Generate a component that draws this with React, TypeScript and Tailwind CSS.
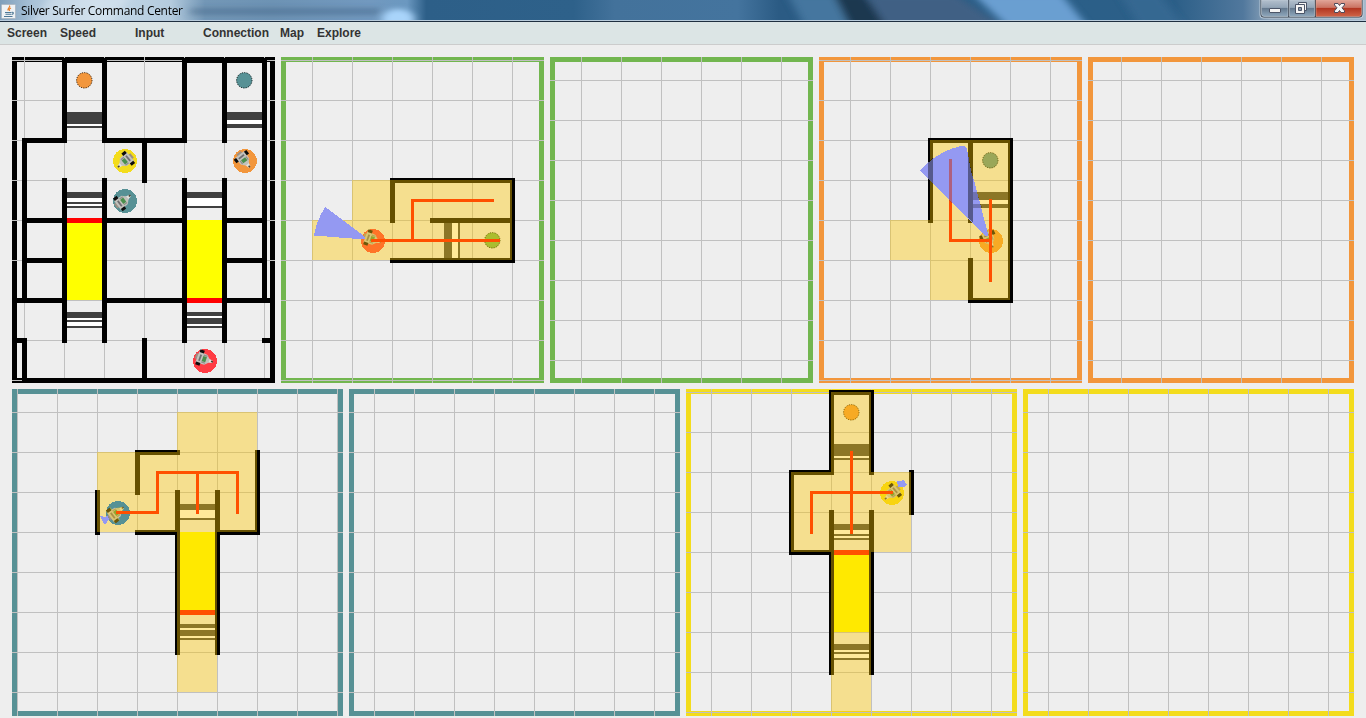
import React from 'react';

type Pt = [number, number];
type Seg = [number, number, number, number];
type Rect = [number, number, number, number];

const GREEN = '#72b64f';
const ORANGE = '#f2963c';
const TEAL = '#579195';
const YELLOW = '#f3dc1c';
const RED = '#ff3c44';

interface BarcodeSpec {
  x: number;
  y: number;
  /** Stripe widths, dark and light in turn, starting with dark. */
  stripes: number[];
  vertical?: boolean;
}

interface RobotSpec {
  x: number;
  y: number;
  color: string;
  angle: number;
  dx?: number;
  dy?: number;
  /** Shades the body as part of the explored area. */
  tinted?: boolean;
}

interface BoardProps {
  x: number;
  y: number;
  w: number;
  h: number;
  color: string;
  gx: number;
  gy: number;
  walls?: Seg[];
  fills?: { r: Rect; color: string }[];
  barcodes?: BarcodeSpec[];
  balls?: { x: number; y: number; color: string }[];
  robots?: RobotSpec[];
  paths?: Pt[][];
  explored?: Rect[];
  children?: React.ReactNode;
}

function Barcode({ x, y, stripes, vertical }: BarcodeSpec) {
  let at = 0;
  return (
    <g>
      {stripes.map((s, i) => {
        const from = at;
        at += s;
        const fill = i % 2 === 0 ? '#404040' : '#ffffff';
        return vertical ? (
          <rect key={i} x={x + from} y={y} width={s} height={35} fill={fill} />
        ) : (
          <rect key={i} x={x} y={y + from} width={35} height={s} fill={fill} />
        );
      })}
    </g>
  );
}

function Ball({ x, y, color }: { x: number; y: number; color: string }) {
  return (
    <g shapeRendering="auto">
      <circle cx={x + 0.3} cy={y + 0.3} r={7.9} fill={color} />
      <circle
        cx={x + 0.3}
        cy={y + 0.3}
        r={7.7}
        fill="none"
        stroke="#000"
        strokeWidth={0.9}
        strokeDasharray="1 1.4"
      />
    </g>
  );
}

function Robot({ x, y, color, angle, dx = 0, dy = 0, tinted }: RobotSpec) {
  return (
    <g>
      <circle cx={x} cy={y} r={12} fill={color} />
      <g transform={`translate(${x + dx} ${y + dy}) rotate(${angle})`} shapeRendering="auto">
        <path d="M-2.500 -9h5.500v3h-5.500z" fill="#9b8f84" />
        <path d="M-2.6 2h5.2l-1.4 7h-2.2z" fill="#e3e3de" />
        <path d="M-6 -7h12l-1 9l-3.500 3.500h-3.400l-3.400 -3.500z" fill="#c2c2bc" />
        <path d="M-8 -6.500h3v4.500h-3zM5 -6.500h3v4.500h-3z" fill="#0c0c0c" />
        <path d="M-3.4 -5h6.6v1.8h-6.6z" fill="#6e6e72" />
        <path d="M-4.200 -1.600h1.200v4h-1.200zM3 -1.600h1.200v4h-1.200z" fill="#8e8e8a" />
        <path d="M-2.6 -1.6h5.2v3.8h-5.2z" fill="#4a8f4c" />
        <path d="M-0.600 7.400h1.600v2h-1.600z" fill="#4a4030" />
        {tinted && <path d="M-8 -7h16v6h-3l-1.500 5l-2.300 5h-2.200l-2.500 -5l-1.500 -5h-3z" fill="#ffc800" fillOpacity={0.4} />}
      </g>
    </g>
  );
}

function Board(p: BoardProps) {
  const vs: number[] = [];
  for (let v = p.gx; v < p.x + p.w; v += 40) vs.push(v);
  const hs: number[] = [];
  for (let v = p.gy; v < p.y + p.h; v += 40) hs.push(v);
  return (
    <svg
      className="block shrink-0"
      width={p.w}
      height={p.h}
      viewBox={`${p.x} ${p.y} ${p.w} ${p.h}`}
      shapeRendering="crispEdges"
    >
      <rect x={p.x + 2.5} y={p.y + 2.5} width={p.w - 5} height={p.h - 5} fill="#eeeeee" stroke={p.color} strokeWidth={5} />
      {vs.map((v) => (
        <rect key={'v' + v} x={v} y={p.y} width={1} height={p.h} fill="#c0c0c0" />
      ))}
      {hs.map((v) => (
        <rect key={'h' + v} x={p.x} y={v} width={p.w} height={1} fill="#c0c0c0" />
      ))}
      {p.barcodes?.map((b, i) => <Barcode key={i} {...b} />)}
      {p.fills?.map((f, i) => (
        <rect key={i} x={f.r[0]} y={f.r[1]} width={f.r[2]} height={f.r[3]} fill={f.color} />
      ))}
      {p.walls?.map(([x1, y1, x2, y2], i) => (
        <rect key={i} x={x1 - 2} y={y1 - 2} width={x2 - x1 + 5} height={y2 - y1 + 5} fill="#000" />
      ))}
      {p.balls?.map((b, i) => <Ball key={i} {...b} />)}
      {p.robots?.map((r, i) => <Robot key={i} {...r} />)}
      {p.paths?.map((pts, i) => (
        <polyline
          key={i}
          points={pts.map(([a, b]) => `${a + 0.5},${b + 0.5}`).join(' ')}
          fill="none"
          stroke="#ff0000"
          strokeWidth={3}
          strokeLinecap="square"
          strokeLinejoin="miter"
        />
      ))}
      {p.explored?.map(([x, y, w, h], i) => (
        <rect key={i} x={x} y={y} width={w} height={h} fill="#ffc800" fillOpacity={0.4} />
      ))}
      {p.children}
    </svg>
  );
}

function TitleBackdrop() {
  return (
    <svg className="absolute inset-0" width={1366} height={20} viewBox="0 0 1366 20" preserveAspectRatio="none">
      <defs>
        <linearGradient id="sky" x1="0" x2="1366" y1="0" y2="0" gradientUnits="userSpaceOnUse">
          <stop offset="0" stopColor="#7f9fbb" />
          <stop offset="0.025" stopColor="#aac3d8" />
          <stop offset="0.07" stopColor="#c6d9e8" />
          <stop offset="0.125" stopColor="#b4cbde" />
          <stop offset="0.15" stopColor="#7397b6" />
          <stop offset="0.2" stopColor="#6d93b4" />
          <stop offset="0.27" stopColor="#7299bf" />
          <stop offset="0.298" stopColor="#6b98c0" />
          <stop offset="0.312" stopColor="#2d5f88" />
          <stop offset="0.42" stopColor="#2e618a" />
          <stop offset="0.45" stopColor="#43729b" />
          <stop offset="0.54" stopColor="#44749e" />
          <stop offset="0.57" stopColor="#2b5b84" />
          <stop offset="0.8" stopColor="#2b5f88" />
          <stop offset="0.86" stopColor="#2c5f88" />
          <stop offset="0.91" stopColor="#51789d" />
          <stop offset="0.93" stopColor="#8ea5bb" />
          <stop offset="1" stopColor="#a5b9cc" />
        </linearGradient>
        <filter id="soft" x="-20%" y="-100%" width="140%" height="300%">
          <feGaussianBlur stdDeviation="4 2.5" />
        </filter>
      </defs>
      <rect width={1366} height={20} fill="url(#sky)" />
      <g filter="url(#soft)">
        <ellipse cx={398} cy={19} rx={16} ry={10} fill="#a9d4fa" />
        <path d="M50 -4h80l-20 30h-80z" fill="#dce8f1" opacity=".5" />
        <path d="M190 8h190v7h-190z" fill="#3d6183" opacity=".45" />
        <path d="M788 -5h48l25 32h-56z" fill="#45769f" />
        <path d="M834 -5h30l24 32h-38z" fill="#1a3850" />
        <path d="M866 -5h90l48 32h-118z" fill="#416184" />
        <path d="M974 -5h88l26 32h-80z" fill="#6b9fd1" />
        <path d="M1120 -5h40l25 32h-45z" fill="#3c6e98" opacity=".6" />
      </g>
    </svg>
  );
}

function TitleBar() {
  return (
    <header className="relative h-[22px] w-full shrink-0 overflow-hidden border-b border-[#1f2f40] bg-[#b8cbdb]">
      <TitleBackdrop />
      <div className="relative flex h-[20px] items-center">
        <svg className="ml-px mt-[2px]" width={15} height={15} viewBox="0 0 15 15">
          <rect x={0.5} y={0.5} width={14} height={14} rx={1} fill="#eef2f5" stroke="#aeb9c4" />
          <path d="M8.5 1.5c1.5 2-3 2.8-1.200 5M10 4c-1.800.8-2.300 1.500-1.200 3" fill="none" stroke="#e8812b" strokeWidth={1.2} />
          <path d="M4 8.500h6.500M4.500 10.300h5.500M3 12.500h8.500M10.800 8.300c2.200-.4 2 2-.3 2.200" fill="none" stroke="#4d7896" strokeWidth={1.1} />
        </svg>
        <span className="ml-[5px] mt-[2px] whitespace-nowrap font-['Open_Sans','Noto_Sans',sans-serif] text-[12px] leading-[18px] tracking-[-0.3px] text-black">
          Silver Surfer Command Center
        </span>
        <svg className="ml-auto mr-[2px] self-start" width={105} height={19} viewBox="1259 0 105 19">
          <defs>
            <linearGradient id="glass" x1="0" x2="0" y1="0" y2="1">
              <stop offset="0" stopColor="#b3c0cd" />
              <stop offset="0.45" stopColor="#93a5b7" />
              <stop offset="0.5" stopColor="#64798e" />
              <stop offset="1" stopColor="#8fa8bd" />
            </linearGradient>
            <linearGradient id="close" x1="0" x2="0" y1="0" y2="1">
              <stop offset="0" stopColor="#e0a598" />
              <stop offset="0.45" stopColor="#cb7463" />
              <stop offset="0.5" stopColor="#b23621" />
              <stop offset="1" stopColor="#cf6448" />
            </linearGradient>
          </defs>
          <path d="M1259.500 0V14.500q0 4 4 4H1359.500q4 0 4-4V0z" fill="#c8d5e0" opacity=".8" />
          <path d="M1260.500 0V14q0 3.500 3.500 3.500H1359q3.500 0 3.500-3.500V0z" fill="#2b3644" />
          <path d="M1261.500 0V14q0 2.500 2.500 2.500H1288V0z" fill="url(#glass)" stroke="#c7d1da" strokeWidth={0.6} />
          <path d="M1289.500 0V16.500H1314.500V0z" fill="url(#glass)" stroke="#c7d1da" strokeWidth={0.6} />
          <path d="M1316 0V16.500H1359q2.500 0 2.500-2.500V0z" fill="url(#close)" stroke="#e5a799" strokeWidth={0.6} />
          <rect x={1269.500} y={8.500} width={11} height={4} rx={0.5} fill="#f5f5f5" stroke="#4b5568" />
          <path d="M1298.500 2.500h8v8h-8z" fill="#f5f5f5" stroke="#4b5568" />
          <path d="M1295.500 4.500h9v9h-9z" fill="#f5f5f5" stroke="#4b5568" />
          <path d="M1298.500 7.500h3v3h-3z" fill="#8798ab" stroke="#4b5568" />
          <path
            d="M1334.500 3.500h3.500l1.500 2l1.500-2h3.500v1.500l-2.500 2.800l2.500 3v1.700h-3.500l-1.500-2l-1.500 2h-3.500v-1.700l2.500-3l-2.500-2.800z"
            fill="#f7f7f7"
            stroke="#4e4a5a"
          />
        </svg>
      </div>
    </header>
  );
}

const MENU = [
  { label: 'Screen', box: 'w-[53px]' },
  { label: 'Speed', box: 'w-[75px]' },
  { label: 'Input', box: 'w-[68px]' },
  { label: 'Connection', box: 'w-[77px]' },
  { label: 'Map', box: 'w-[37px]' },
  { label: 'Explore', box: 'w-[60px]' },
];

function MenuBar() {
  return (
    <nav className="flex h-[23px] shrink-0 border-b border-[#cccccc] bg-[#dce5e5] pl-[7px] font-['Liberation_Sans',Arial,sans-serif] text-[12px] font-bold leading-[22px] text-[#333333]">
      {MENU.map((m) => (
        <span key={m.label} className={m.box}>
          {m.label}
        </span>
      ))}
    </nav>
  );
}

const SONAR = '#9499f2';

export default function App() {
  return (
    <div className="flex h-[718px] w-[1366px] flex-col overflow-hidden bg-[#eeeeee]">
      <TitleBar />
      <MenuBar />
      <main className="flex flex-col gap-[6px] pl-3 pt-3">
        <div className="flex gap-[6px]">
          <Board
            x={12} y={57} w={263} h={326} color="#000000" gx={24} gy={60}
            walls={[
              [64, 60, 104, 60], [184, 60, 264, 60],
              [64, 60, 64, 140], [104, 60, 104, 140], [184, 60, 184, 140], [224, 60, 224, 140], [264, 60, 264, 300],
              [24, 140, 64, 140], [104, 140, 184, 140], [24, 140, 24, 300], [144, 140, 144, 180],
              [64, 180, 64, 340], [104, 180, 104, 340], [184, 180, 184, 340], [224, 180, 224, 340],
              [24, 220, 64, 220], [104, 220, 184, 220], [224, 220, 264, 220],
              [24, 260, 64, 260], [224, 260, 264, 260],
              [-16, 300, 64, 300], [104, 300, 184, 300], [224, 300, 304, 300],
              [-16, 340, 24, 340], [264, 340, 304, 340],
              [24, 340, 24, 380], [144, 340, 144, 380], [24, 380, 304, 380],
            ]}
            barcodes={[
              { x: 67, y: 112, stripes: [12, 2, 2] },
              { x: 227, y: 112, stripes: [8, 4, 4] },
              { x: 67, y: 192, stripes: [6, 4, 2, 2, 2] },
              { x: 187, y: 192, stripes: [6, 8, 2] },
              { x: 67, y: 312, stripes: [6, 2, 2, 4, 2] },
              { x: 187, y: 312, stripes: [4, 2, 6, 2, 2] },
            ]}
            fills={[
              { r: [67, 220, 35, 80], color: '#ffff00' },
              { r: [67, 218, 35, 5], color: '#ff0000' },
              { r: [187, 220, 35, 80], color: '#ffff00' },
              { r: [187, 298, 35, 5], color: '#ff0000' },
            ]}
            balls={[{ x: 84, y: 80, color: ORANGE }, { x: 244, y: 80, color: TEAL }]}
            robots={[
              { x: 125, y: 161, color: YELLOW, angle: 50 },
              { x: 125, y: 201, color: TEAL, angle: 233, dx: -2 },
              { x: 245, y: 161, color: ORANGE, angle: -38, dx: -1, dy: -1 },
              { x: 205, y: 361, color: RED, angle: -70, dx: -1, dy: -2 },
            ]}
          />
          <Board
            x={281} y={57} w={263} h={326} color={GREEN} gx={312} gy={60}
            walls={[
              [392, 180, 392, 220], [392, 180, 512, 180], [512, 180, 512, 260],
              [392, 260, 512, 260], [432, 220, 512, 220],
            ]}
            barcodes={[{ x: 444, y: 223, stripes: [8, 6, 2], vertical: true }]}
            balls={[{ x: 492, y: 240, color: GREEN }]}
            robots={[{ x: 373, y: 241, color: RED, angle: -70, dx: -1, dy: -2 }]}
            paths={[[[372, 240], [498, 240]], [[412, 240], [412, 200], [492, 200]]]}
            explored={[[352, 180, 160, 40], [312, 220, 200, 40]]}
          >
            <path d="M325.300 207L364.500 236.500V239.500L314 235.500Q316.500 220 325.300 207z" fill={SONAR} />
          </Board>
          <Board x={550} y={57} w={263} h={326} color={GREEN} gx={581} gy={80} />
          <Board
            x={819} y={57} w={263} h={326} color={ORANGE} gx={850} gy={60}
            walls={[
              [930, 140, 930, 220], [930, 140, 1010, 140], [970, 140, 970, 220],
              [1010, 140, 1010, 300], [970, 260, 970, 300], [970, 300, 1010, 300],
            ]}
            barcodes={[{ x: 973, y: 192, stripes: [8, 4, 4] }]}
            balls={[{ x: 990, y: 160, color: TEAL }]}
            robots={[{ x: 991, y: 241, color: ORANGE, angle: -25, dx: -2, dy: -2 }]}
            paths={[[[990, 200], [990, 280]], [[990, 240], [950, 240], [950, 160]]]}
            explored={[[930, 140, 80, 160], [890, 220, 40, 40]]}
          >
            <path
              d="M920 170.500Q940 149 964.500 145.500L967 149L971 171L975 184L988.500 236H986z"
              fill={SONAR}
            />
            <path d="M928 162.500L933 158V184L928 179zM968 155L973 178V223L968 218z" fill="#000" opacity={0.42} />
            <path d="M973 192H977L979.500 200H973zM973 204H981L982 208H973z" fill="#000" opacity={0.25} />
            <path d="M949 159h3v45l-3 -3z" fill="#c03a30" opacity={0.6} />
          </Board>
          <Board x={1088} y={57} w={266} h={326} color={ORANGE} gx={1121} gy={80} />
        </div>
        <div className="flex gap-[6px]">
          <Board
            x={12} y={389} w={331} h={327} color={TEAL} gx={17} gy={412}
            walls={[
              [137, 452, 177, 452], [137, 452, 137, 492], [97, 492, 97, 532], [257, 452, 257, 532],
              [137, 532, 177, 532], [217, 532, 257, 532], [177, 492, 177, 652], [217, 492, 217, 652],
            ]}
            barcodes={[
              { x: 180, y: 504, stripes: [6, 8, 2] },
              { x: 180, y: 624, stripes: [4, 2, 6, 2, 2] },
            ]}
            fills={[
              { r: [180, 532, 35, 78], color: '#ffff00' },
              { r: [180, 610, 35, 5], color: '#ff0000' },
            ]}
            paths={[
              [[130, 512], [157, 512], [157, 472], [237, 472], [237, 512]],
              [[197, 472], [197, 512]],
            ]}
            explored={[[97, 452, 160, 80], [177, 412, 80, 40], [177, 532, 40, 160]]}
          >
            <Robot x={118} y={513} color={TEAL} angle={233} dx={-2} tinted />
            <rect x={116} y={511} width={16} height={3} fill="#ff5000" />
            <path d="M100 516L105 517L107 515L109 519L106 524H104L102 520z" fill={SONAR} />
          </Board>
          <Board x={349} y={389} w={331} h={327} color={TEAL} gx={374} gy={412} />
          <Board
            x={686} y={389} w={331} h={327} color={YELLOW} gx={711} gy={392}
            walls={[
              [831, 392, 871, 392], [831, 392, 831, 472], [871, 392, 871, 472],
              [791, 472, 831, 472], [791, 472, 791, 552], [791, 552, 831, 552],
              [831, 512, 831, 672], [871, 512, 871, 672], [911, 472, 911, 512],
            ]}
            barcodes={[
              { x: 834, y: 444, stripes: [12, 2, 2] },
              { x: 834, y: 524, stripes: [6, 4, 2, 2, 2] },
              { x: 834, y: 644, stripes: [6, 2, 2, 4, 2] },
            ]}
            fills={[
              { r: [834, 552, 35, 80], color: '#ffff00' },
              { r: [834, 550, 35, 5], color: '#ff0000' },
            ]}
            balls={[{ x: 851, y: 412, color: ORANGE }]}
            robots={[{ x: 892, y: 493, color: YELLOW, angle: 50 }]}
            paths={[[[851, 452], [851, 532]], [[891, 492], [811, 492], [811, 532]]]}
            explored={[[831, 392, 40, 80], [791, 472, 120, 80], [831, 552, 40, 160]]}
          >
            <path d="M897 481L901 481L903 479L907 485L904 487L898 487z" fill={SONAR} />
          </Board>
          <Board x={1023} y={389} w={331} h={327} color={YELLOW} gx={1048} gy={412} />
        </div>
      </main>
    </div>
  );
}
